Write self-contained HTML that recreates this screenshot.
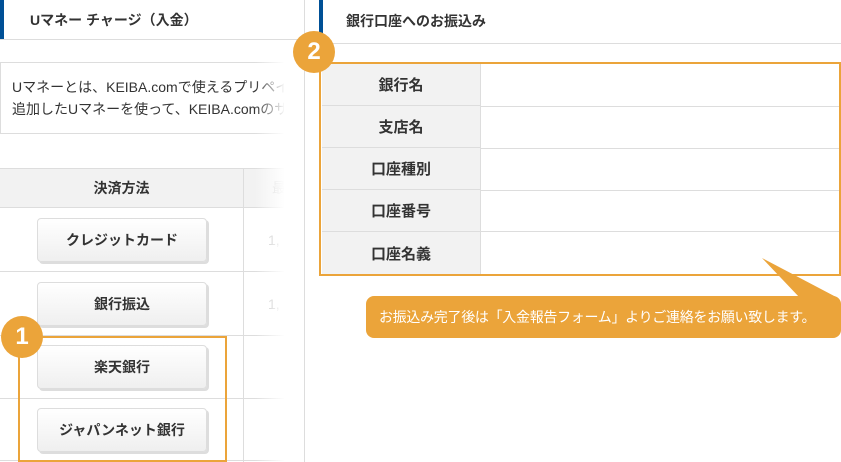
<!DOCTYPE html>
<html><head><meta charset="utf-8"><style>
*{margin:0;padding:0;box-sizing:border-box}
body{width:841px;height:462px;overflow:hidden;background:#fff;font-family:"Liberation Sans","Noto Sans CJK JP",sans-serif;color:#333;position:relative}
.a{position:absolute}
.btn{position:absolute;left:37px;width:170px;height:44px;border:1px solid #ddd;border-radius:4px;background:linear-gradient(#fff,#efefef);box-shadow:2px 2px 0 #ddd;font-weight:bold;font-size:14px;display:flex;align-items:center;justify-content:center;color:#333}
.hl{position:absolute;height:1px;background:#ddd}
.lab{position:absolute;left:322px;width:158px;height:42px;background:#f2f2f2;font-weight:bold;font-size:15px;display:flex;align-items:center;justify-content:center;border-bottom:1px solid #ddd}
.circ{position:absolute;width:42px;height:42px;border-radius:50%;background:#eba43a;color:#fff;font-size:24px;font-weight:bold;display:flex;align-items:center;justify-content:center}
</style></head><body>
<div class="a" style="left:0;top:0;width:4px;height:39px;background:#005096"></div>
<div class="a" style="left:30px;top:10px;font-size:14px;font-weight:bold">Uマネー チャージ（入金）</div>
<div class="hl" style="left:0;top:39px;width:304px"></div>
<div class="a" style="left:0;top:60px;width:284px;height:402px;overflow:hidden">
<div class="a" style="left:0;top:2px;width:300px;height:72px;border:1px solid #ddd"></div>
<div class="a" style="left:12px;top:16px;font-size:14px;line-height:22px;white-space:nowrap">Uマネーとは、KEIBA.comで使えるプリペイド<br>追加したUマネーを使って、KEIBA.comのサービス</div>
<div class="a" style="left:0;top:108px;width:300px;height:40px;background:#f2f2f2;border-top:1px solid #ddd;border-bottom:1px solid #ddd"></div>
<div class="a" style="left:272px;top:118px;font-size:14px;color:#ccc">最</div>
<div class="a" style="left:268px;top:172px;font-size:14px;color:#bbb">1,</div>
<div class="a" style="left:268px;top:236px;font-size:14px;color:#bbb">1,</div>
<div class="hl" style="left:0;top:211px;width:300px"></div>
<div class="hl" style="left:0;top:275px;width:300px"></div>
<div class="hl" style="left:0;top:338px;width:300px"></div>
<div class="hl" style="left:0;top:400px;width:300px"></div>
<div class="a" style="left:243px;top:108px;width:1px;height:294px;background:#ddd"></div>
<div class="a" style="left:255px;top:0;width:30px;height:402px;background:linear-gradient(90deg,rgba(255,255,255,0),#fff)"></div>
</div>
<div class="a" style="left:0;top:168px;width:243px;height:40px;font-weight:bold;font-size:14px;display:flex;align-items:center;justify-content:center">決済方法</div>
<div class="btn" style="top:218px">クレジットカード</div>
<div class="btn" style="top:282px">銀行振込</div>
<div class="btn" style="top:345px">楽天銀行</div>
<div class="btn" style="top:408px">ジャパンネット銀行</div>
<div class="a" style="left:304px;top:0;width:1px;height:462px;background:#ddd"></div>
<div class="a" style="left:18px;top:336px;width:209px;height:126px;border:2px solid #eba43a"></div>
<div class="circ" style="left:1px;top:316px">1</div>

<div class="a" style="left:319px;top:0;width:4px;height:34px;background:#005096"></div>
<div class="a" style="left:346px;top:11px;font-size:14px;font-weight:bold">銀行口座へのお振込み</div>
<div class="hl" style="left:320px;top:43px;width:521px"></div>
<div class="lab" style="top:64px">銀行名</div>
<div class="lab" style="top:106px">支店名</div>
<div class="lab" style="top:148px">口座種別</div>
<div class="lab" style="top:190px">口座番号</div>
<div class="lab" style="top:232px;border-bottom:none">口座名義</div>
<div class="a" style="left:480px;top:64px;width:1px;height:210px;background:#ddd"></div>
<div class="hl" style="left:480px;top:106px;width:360px"></div>
<div class="hl" style="left:480px;top:148px;width:360px"></div>
<div class="hl" style="left:480px;top:190px;width:360px"></div>
<div class="hl" style="left:480px;top:231px;width:360px"></div>
<div class="a" style="left:319px;top:62px;width:522px;height:214px;border:2px solid #eba43a"></div>
<div class="circ" style="left:293px;top:31px">2</div>
<svg class="a" style="left:0;top:0" width="841" height="462"><polygon points="762,258 800,298 838,298" fill="#eba43a"/></svg>
<div class="a" style="left:366px;top:296px;width:475px;height:42px;border-radius:8px;background:#eba43a;color:#fff;font-size:14px;letter-spacing:-0.3px;display:flex;align-items:center;padding-left:13px;white-space:nowrap">お振込み完了後は「入金報告フォーム」よりご連絡をお願い致します。</div>
</body></html>
